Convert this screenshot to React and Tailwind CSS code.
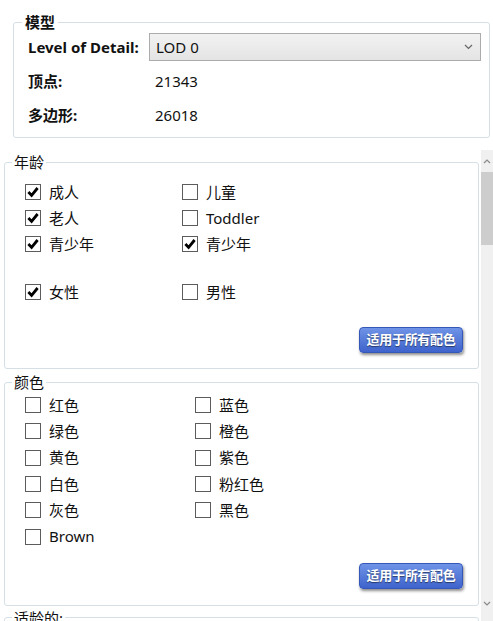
import React from "react";

const ageRows = [
  [
    { label: "成人", checked: true },
    { label: "儿童", checked: false },
  ],
  [
    { label: "老人", checked: true },
    { label: "Toddler", checked: false },
  ],
  [
    { label: "青少年", checked: true },
    { label: "青少年", checked: true },
  ],
];

const colorRows = [
  ["红色", "蓝色"],
  ["绿色", "橙色"],
  ["黄色", "紫色"],
  ["白色", "粉红色"],
  ["灰色", "黑色"],
  ["Brown", null],
];

const CheckBox = ({ label, checked, tall }) => (
  <div className={`flex items-center ${tall ? "h-[26.3px]" : "h-[26px]"}`}>
    <span className="w-4 h-4 border border-[#5c5c5c] bg-white flex items-center justify-center">
      {checked && (
        <svg width="14" height="14" viewBox="0 0 14 14">
          <path
            d="M2.4 7 L5.6 10.4 L11.6 3"
            fill="none"
            stroke="#000"
            strokeWidth="2.8"
          />
        </svg>
      )}
    </span>
    <span className="ml-2 text-[15px] text-[#111]">{label}</span>
  </div>
);

const ApplyButton = () => (
  <div className="flex justify-end">
    <button className="w-[104px] h-[26px] rounded-[4px] border border-[#3557b8] bg-gradient-to-b from-[#6f93e6] to-[#3f63cc] text-white text-[13px] font-bold tracking-[-0.3px] shadow-[1px_2px_3px_rgba(0,0,0,0.45)] [text-shadow:0_1px_1px_rgba(0,0,0,0.5)]">
      适用于所有配色
    </button>
  </div>
);

const App = () => {
  return (
    <div
      className="w-[493px] h-[621px] bg-white overflow-hidden flex flex-col text-[#111]"
      style={{ fontFamily: '"Noto Sans", "Noto Sans CJK SC", sans-serif' }}
    >
      {/* 模型 */}
      <fieldset className="mt-[14px] ml-[13px] w-[477px] border border-[#d5dfe5] rounded-[3px] pl-[14px] pr-[8px] pb-[5px]">
        <legend className="ml-[-6px] px-[3px] text-[15px] leading-[16px] font-bold">
          模型
        </legend>
        <div className="grid grid-cols-[121px_1fr]">
          <div className="h-[34px] flex items-center text-[15px] font-bold">
            Level of Detail:
          </div>
          <div className="h-[34px] flex items-center">
            <div className="w-full h-[28px] border border-[#acacac] bg-gradient-to-b from-[#f2f2f2] to-[#e4e4e4] flex items-center justify-between pl-[6px] pr-[7px]">
              <span className="text-[15px]">LOD 0</span>
              <svg width="9" height="6" viewBox="0 0 9 6">
                <path d="M1 1 L4.5 4.5 L8 1" fill="none" stroke="#666" strokeWidth="1.2" />
              </svg>
            </div>
          </div>
          <div className="h-[34px] flex items-center text-[15px] font-bold">顶点:</div>
          <div className="h-[34px] flex items-center text-[15px] pl-[6px]">21343</div>
          <div className="h-[34px] flex items-center text-[15px] font-bold">多边形:</div>
          <div className="h-[34px] flex items-center text-[15px] pl-[6px]">26018</div>
        </div>
      </fieldset>

      <div className="mt-[12px] flex flex-1 min-h-0">
        <div className="w-[481px] flex flex-col">
          {/* 年龄 */}
          <fieldset className="mt-[2px] ml-[4px] w-[475px] border border-[#d5dfe5] rounded-[3px] pl-[20px] pr-[15px] pt-[7px] pb-[15px]">
            <legend className="ml-[-13px] px-[2px] text-[15px] leading-[20px]">年龄</legend>
            {ageRows.map((row, i) => (
              <div key={i} className="grid grid-cols-[157px_1fr]">
                <CheckBox {...row[0]} />
                <CheckBox {...row[1]} />
              </div>
            ))}
            <div className="mt-[22px] grid grid-cols-[157px_1fr]">
              <CheckBox label="女性" checked />
              <CheckBox label="男性" checked={false} />
            </div>
            <div className="mt-[22px]">
              <ApplyButton />
            </div>
          </fieldset>

          {/* 颜色 */}
          <fieldset className="mt-[3px] ml-[4px] w-[475px] border border-[#d5dfe5] rounded-[3px] pl-[20px] pr-[15px] pb-[16px]">
            <legend className="ml-[-13px] px-[2px] text-[15px] leading-[20px]">颜色</legend>
            <div>
              {colorRows.map(([a, b], i) => (
                <div key={i} className="grid grid-cols-[170px_1fr]">
                  <CheckBox label={a} checked={false} tall />
                  {b ? <CheckBox label={b} checked={false} tall /> : <div />}
                </div>
              ))}
            </div>
            <div className="mt-[13px]">
              <ApplyButton />
            </div>
          </fieldset>

          {/* 适龄的 */}
          <fieldset className="mt-[2px] ml-[4px] w-[475px] h-[80px] border border-[#d5dfe5] rounded-[3px] pl-[20px]">
            <legend className="ml-[-13px] px-[2px] text-[15px] leading-[20px]">适龄的:</legend>
          </fieldset>
        </div>

        {/* scrollbar */}
        <div className="w-[12px] bg-[#f0f0f0] flex flex-col items-center">
          <div className="h-[22px] flex items-center justify-center">
            <svg width="8" height="5" viewBox="0 0 8 5">
              <path d="M1 4 L4 1 L7 4" fill="none" stroke="#8a8a8a" strokeWidth="1.2" />
            </svg>
          </div>
          <div className="w-full h-[73px] bg-[#cdcdcd]" />
          <div className="flex-1" />
          <div className="h-[22px] flex items-start justify-center pt-[2px]">
            <svg width="8" height="5" viewBox="0 0 8 5">
              <path d="M1 1 L4 4 L7 1" fill="none" stroke="#8a8a8a" strokeWidth="1.2" />
            </svg>
          </div>
        </div>
      </div>
    </div>
  );
};

export default App;
